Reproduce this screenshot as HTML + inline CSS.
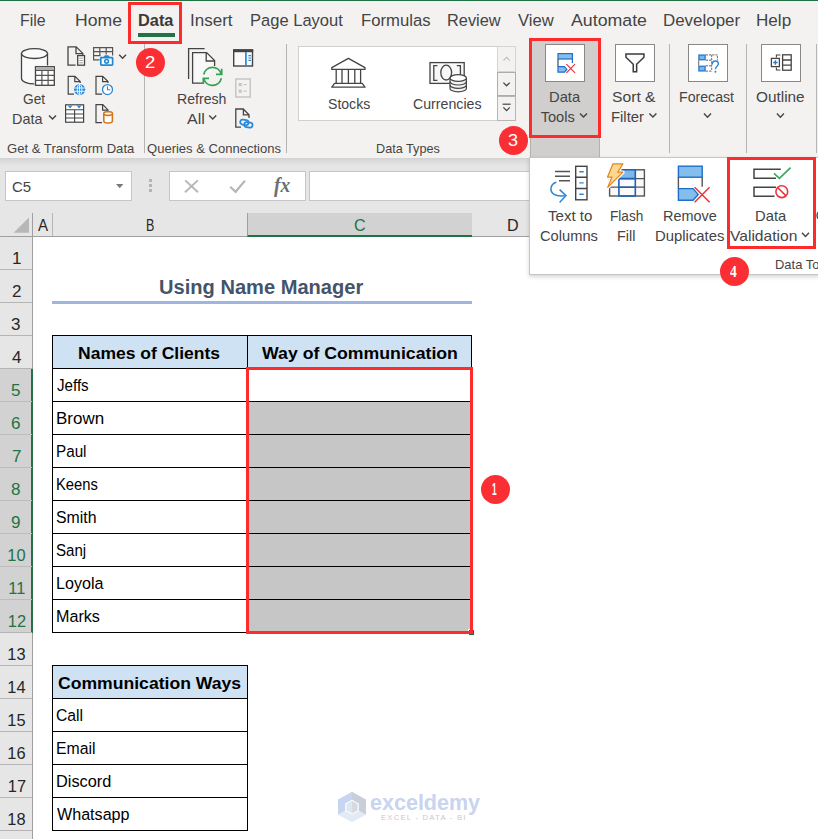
<!DOCTYPE html>
<html lang="en">
<head>
<meta charset="utf-8">
<title>Using Name Manager - Excel</title>
<style>
html,body{margin:0;padding:0;background:#fff;}
body{width:818px;height:839px;overflow:hidden;position:relative;font-family:"Liberation Sans",sans-serif;}
#app{position:absolute;left:0;top:0;width:818px;height:839px;overflow:hidden;background:#fff;}
.abs,.t,svg.i{position:absolute;}
.t{white-space:pre;line-height:1;transform-origin:0 0;}
svg.i{overflow:visible;}
.tabs{left:0;top:0;width:818px;height:40px;background:#f3f2f1;}
.topline{left:0;top:0;width:818px;height:1px;background:#217346;}
.ribbon{left:0;top:38px;width:818px;height:120px;background:#f3f2f1;}
.sep{width:1px;background:#b6b4b2;top:44px;height:109px;}
.shadow{left:0;top:158px;width:818px;height:8px;background:linear-gradient(#d2d2d2,#dcdcdc 40%,#e6e6e6);}
.fbar{left:0;top:158px;width:818px;height:55px;background:#e6e6e6;}
.box{background:#fff;border:1px solid #c6c6c6;box-sizing:border-box;}
.colhdr{left:0;top:212px;width:818px;height:25px;background:#e6e6e6;border-bottom:1px solid #9f9f9f;box-sizing:border-box;}
.rowhdr{left:0;top:237px;width:33px;height:602px;background:#e6e6e6;border-right:1px solid #9f9f9f;box-sizing:border-box;}
.rline{left:0;width:32px;height:1px;background:#b5b5b5;}
.cell{box-sizing:border-box;}
.redbox{border:3px solid #fd2b2b;box-sizing:border-box;}
.badge{width:29.2px;height:29.2px;border-radius:50%;background:#fb2f33;}
.hl{height:1px;background:#000;}
.vl{width:1px;background:#000;}
.iconbox{background:#fff;border:1px solid #8a8886;box-sizing:border-box;width:40px;height:38px;top:44px;}
</style>
</head>
<body>
<div id="app">
<!-- ===== Tab strip ===== -->
<div class="abs tabs"></div>
<div class="abs ribbon"></div>
<div class="abs topline"></div>
<div class="abs" style="left:138px;top:33px;width:37px;height:4px;background:#217346"></div>

<!-- ===== Ribbon separators ===== -->
<div class="abs sep" style="left:144px"></div>
<div class="abs sep" style="left:286px"></div>
<div class="abs sep" style="left:669px"></div>
<div class="abs sep" style="left:746px"></div>
<div class="abs sep" style="left:816px"></div>

<!-- Data types gallery -->
<div class="abs box" style="left:298px;top:46px;width:218px;height:75px;border-color:#d2d0ce"></div>
<div class="abs" style="left:497px;top:46px;width:19px;height:26px;background:#f3f2f1;border:1px solid #d6d4d2;box-sizing:border-box"></div>
<div class="abs" style="left:497px;top:72px;width:19px;height:24px;background:#f3f2f1;border:1px solid #aeacaa;box-sizing:border-box"></div>
<div class="abs" style="left:497px;top:96px;width:19px;height:25px;background:#f3f2f1;border:1px solid #b8b6b4;box-sizing:border-box"></div>

<!-- Data Tools pressed button -->
<div class="abs" style="left:530px;top:38px;width:70px;height:120px;background:#d0cfce;border-left:1px solid #b3b1af;border-right:1px solid #b3b1af;box-sizing:border-box"></div>
<div class="abs iconbox" style="left:545px;border-color:#8a8886"></div>
<div class="abs iconbox" style="left:615px"></div>
<div class="abs iconbox" style="left:688px"></div>
<div class="abs iconbox" style="left:761px"></div>

<!-- ===== Formula bar ===== -->
<div class="abs fbar"></div>
<div class="abs shadow"></div>
<div class="abs box" style="left:5px;top:171px;width:127px;height:30px"></div>
<div class="abs box" style="left:169px;top:171px;width:137px;height:30px"></div>
<div class="abs box" style="left:309px;top:171px;width:520px;height:30px"></div>
<div class="abs" style="left:149px;top:179px;width:3px;height:3px;background:#b4b4b4;box-shadow:0 5px 0 #b4b4b4,0 10px 0 #b4b4b4"></div>

<!-- ===== Grid ===== -->
<div class="abs colhdr"></div>
<div class="abs" style="left:247px;top:213px;width:225px;height:24px;background:#d2d2d2;border-bottom:2px solid #217346;border-left:1px solid #9f9f9f;box-sizing:border-box"></div>
<div class="abs" style="left:32px;top:213px;width:1px;height:24px;background:#9f9f9f"></div>
<div class="abs" style="left:52px;top:213px;width:1px;height:23px;background:#b5b5b5"></div>
<div class="abs rowhdr"></div>
<div class="abs" style="left:0;top:369px;width:33px;height:264px;background:#d2d2d2;border-right:2px solid #217346;box-sizing:border-box"></div>
<div class="abs rline" style="top:269px;background:#b5b5b5"></div>
<div class="abs rline" style="top:302px;background:#b5b5b5"></div>
<div class="abs rline" style="top:335px;background:#b5b5b5"></div>
<div class="abs rline" style="top:368px;background:#b5b5b5"></div>
<div class="abs rline" style="top:401px;background:#bcbcbc"></div>
<div class="abs rline" style="top:434px;background:#bcbcbc"></div>
<div class="abs rline" style="top:467px;background:#bcbcbc"></div>
<div class="abs rline" style="top:500px;background:#bcbcbc"></div>
<div class="abs rline" style="top:533px;background:#bcbcbc"></div>
<div class="abs rline" style="top:566px;background:#bcbcbc"></div>
<div class="abs rline" style="top:599px;background:#bcbcbc"></div>
<div class="abs rline" style="top:632px;background:#b5b5b5"></div>
<div class="abs rline" style="top:665px;background:#b5b5b5"></div>
<div class="abs rline" style="top:698px;background:#b5b5b5"></div>
<div class="abs rline" style="top:731px;background:#b5b5b5"></div>
<div class="abs rline" style="top:764px;background:#b5b5b5"></div>
<div class="abs rline" style="top:797px;background:#b5b5b5"></div>
<div class="abs rline" style="top:830px;background:#b5b5b5"></div>

<!-- title underline -->
<div class="abs" style="left:52px;top:301px;width:420px;height:3px;background:#9fb4df"></div>

<!-- table 1 -->
<div class="abs" style="left:53px;top:336px;width:418px;height:32px;background:#cfe2f3"></div>
<div class="abs" style="left:248px;top:402px;width:223px;height:230px;background:#c6c6c6"></div>
<div class="abs hl" style="left:52px;top:335px;width:420px"></div>
<div class="abs hl" style="left:52px;top:368px;width:420px"></div>
<div class="abs hl" style="left:52px;top:401px;width:420px"></div>
<div class="abs hl" style="left:52px;top:434px;width:420px"></div>
<div class="abs hl" style="left:52px;top:467px;width:420px"></div>
<div class="abs hl" style="left:52px;top:500px;width:420px"></div>
<div class="abs hl" style="left:52px;top:533px;width:420px"></div>
<div class="abs hl" style="left:52px;top:566px;width:420px"></div>
<div class="abs hl" style="left:52px;top:599px;width:420px"></div>
<div class="abs hl" style="left:52px;top:632px;width:420px"></div>
<div class="abs vl" style="left:52px;top:335px;height:298px"></div>
<div class="abs vl" style="left:247px;top:335px;height:298px"></div>
<div class="abs vl" style="left:471px;top:335px;height:298px"></div>
<!-- table 2 -->
<div class="abs" style="left:53px;top:666px;width:194px;height:32px;background:#cfe2f3"></div>
<div class="abs hl" style="left:52px;top:665px;width:196px"></div>
<div class="abs hl" style="left:52px;top:698px;width:196px"></div>
<div class="abs hl" style="left:52px;top:731px;width:196px"></div>
<div class="abs hl" style="left:52px;top:764px;width:196px"></div>
<div class="abs hl" style="left:52px;top:797px;width:196px"></div>
<div class="abs hl" style="left:52px;top:830px;width:196px"></div>
<div class="abs vl" style="left:52px;top:665px;height:166px"></div>
<div class="abs vl" style="left:247px;top:665px;height:166px"></div>

<!-- red selection -->
<div class="abs" style="left:468px;top:629px;width:5px;height:5px;background:#1e6b41;border-left:1px solid #fff;border-top:1px solid #fff"></div>
<div class="abs redbox" style="left:246px;top:367px;width:227px;height:267px"></div>

<!-- ===== Dropdown panel ===== -->
<div class="abs" style="left:529px;top:157px;width:300px;height:118px;background:#fff;border:1px solid #c6c6c6;box-sizing:border-box;box-shadow:0 2px 4px rgba(0,0,0,.17)"></div>

<!-- red boxes -->
<div class="abs redbox" style="left:128px;top:2px;width:54px;height:42px"></div>
<div class="abs redbox" style="left:529px;top:38px;width:72px;height:100px"></div>
<div class="abs redbox" style="left:727px;top:157px;width:89px;height:92px"></div>

<!-- badges -->
<div class="abs badge" style="left:135.9px;top:47.7px"></div>
<div class="abs badge" style="left:498.9px;top:125.7px"></div>
<div class="abs badge" style="left:719.9px;top:256.9px"></div>
<div class="abs badge" style="left:481px;top:474.8px"></div>

<svg class="i" style="left:0;top:0" width="818" height="839" viewBox="0 0 818 839" fill="none" stroke-linecap="butt" stroke-linejoin="miter">
<!-- ===== Get Data (cylinder + table) ===== -->
<path d="M21.500 53.600V78.500c0 3 5.800 5.400 13 5.400s13-2.400 13-5.400V53.600z" fill="#fafafa" stroke="#444" stroke-width="1.300"/>
<ellipse cx="34.500" cy="53.600" rx="13" ry="4.900" fill="#fafafa" stroke="#444" stroke-width="1.300"/>
<rect x="34.300" y="65.500" width="21.200" height="21" fill="#f3f2f1"/>
<rect x="35.500" y="66.700" width="18.800" height="18.600" fill="#fff" stroke="#444" stroke-width="1.300"/>
<rect x="36.100" y="67.300" width="17.600" height="3" fill="#b0b0b0"/>
<path d="M35.500 70.500h18.800M35.500 75.300h18.800M35.500 80.300h18.800M41.900 70.500v14.800M48.100 70.500v14.800" stroke="#555" stroke-width="1.200"/>

<!-- small icons column 1 -->
<!-- From Text/CSV -->
<g stroke="#444" stroke-width="1.300">
<path d="M75.600 65.200H68V46.800h8.200l6.600 6.600V55M76 46.800v6.800h6.800"/>
<rect x="77.700" y="55.600" width="6.800" height="9.600" fill="#fff"/>
</g>
<path d="M79.200 58.200h3.800M79.200 60.500h3.800M79.200 62.800h3.800" stroke="#8a8a8a" stroke-width="0.800"/>
<!-- From Picture -->
<g stroke="#555" stroke-width="1.200">
<path d="M99.600 59.800H93.600V47.600H112.600V55.400M93.600 51.600h19M93.600 55.600h7M99.800 47.600v8.600M106.200 47.600v7"/>
</g>
<rect x="100.800" y="57.600" width="11.800" height="7.600" rx="0.600" fill="#fff" stroke="#1e8ad6" stroke-width="1.700"/>
<path d="M103.800 57.400l1-1.700h3.600l1 1.700z" fill="#1e8ad6" stroke="#1e8ad6" stroke-width="0.800"/>
<circle cx="106.600" cy="61.300" r="1.900" stroke="#1e8ad6" stroke-width="1.500" fill="#fff"/>
<path d="M119.200 54.800l3.400 3.500 3.400-3.500" stroke="#444" stroke-width="1.400"/>
<!-- From Web -->
<g stroke="#444" stroke-width="1.2">
<path d="M74 94.2H68.2V76.3h6.8l5.2 5.2V83M74.8 76.3v5.4h5.4"/>
</g>
<circle cx="79.6" cy="89.6" r="5.6" fill="#2b88d8"/>
<g stroke="#fff" stroke-width="0.9"><ellipse cx="79.6" cy="89.6" rx="2.3" ry="5"/><path d="M74.3 88h10.6M74.3 91.3h10.6M79.6 84.4v10.4"/></g>
<!-- Recent sources -->
<g stroke="#444" stroke-width="1.2">
<path d="M102 94.2H96V76.3h6.8l5.2 5.2V83M102.6 76.3v5.4h5.4"/>
</g>
<circle cx="107.5" cy="89.6" r="5" fill="#fff" stroke="#2b88d8" stroke-width="1.3"/>
<path d="M107.5 86.3v3.5h2.8" stroke="#2b88d8" stroke-width="1.1"/>
<!-- From table/range -->
<rect x="65.6" y="104.8" width="18" height="17.4" fill="#fff" stroke="#444" stroke-width="1.2"/>
<path d="M65.6 109.8h18M65.6 114h18M65.6 118h18M74.6 109.8v12.4" stroke="#444" stroke-width="1.1"/>
<path d="M67.6 105.6h5l-2.5 2.8zM76.6 105.6h5l-2.5 2.8z" fill="#2b88d8"/>
<!-- Existing connections -->
<g stroke="#444" stroke-width="1.2">
<path d="M102 122.6H96V104.7h6.8l5.2 5.2V112M102.6 104.7v5.4h5.4"/>
</g>
<g stroke="#d4771a" stroke-width="1.600" fill="#fff">
<path d="M103.8 113.5v7.5c0 1.1 1.9 2 4.3 2s4.3-.9 4.3-2v-7.5"/>
<ellipse cx="108.1" cy="113.5" rx="4.3" ry="1.9"/>
</g>

<!-- ===== Refresh All ===== -->
<g stroke="#444" stroke-width="1.3">
<path d="M188.6 79V48.6h16"/>
<path d="M204 83.200H192.600V52.600h14l8 8V66" fill="#f8f8f8"/><path d="M206.200 52.600v8.400h8.400"/>
</g>
<g stroke="#33a152" stroke-width="1.700">
<path d="M203.700 74.500A9 9 0 0 1 221.200 74.100"/>
<path d="M221.300 78.300A9 9 0 0 1 203.800 78.700"/>
<path d="M216 74.400H221.700V68.700M209 78.400H203.300V84.100"/>
</g>
<!-- Queries & Connections pane -->
<rect x="233.700" y="50" width="18.800" height="16" fill="#fafafa" stroke="#444" stroke-width="1.400"/>
<rect x="233" y="49.300" width="20.200" height="2.900" fill="#444"/>
<path d="M245.900 52v14" stroke="#2b88d8" stroke-width="1.700"/>
<path d="M248.400 55.600h2.600M248.400 58h2.600M248.400 60.400h2.600" stroke="#2b88d8" stroke-width="1.200"/>
<!-- Properties (disabled) -->
<rect x="235.8" y="79" width="14.4" height="18" fill="#f3f2f1" stroke="#c0bebc" stroke-width="1.3"/>
<rect x="238.6" y="83" width="3.2" height="3.2" fill="#c8c6c4"/><rect x="238.6" y="89.6" width="3.2" height="3.2" fill="#c8c6c4"/>
<path d="M243.6 84.6h3M243.6 91.2h3" stroke="#c8c6c4" stroke-width="1.2"/>
<!-- Edit links -->
<g stroke="#444" stroke-width="1.3">
<path d="M241 127.2H235.8V109h7.4l5.8 5.8V118M243.4 109v5.8h5.6"/>
</g>
<g stroke="#2b88d8" stroke-width="1.700">
<rect x="240.200" y="119.800" width="8.400" height="5" rx="2.500" transform="rotate(8 244.400 122.300)"/>
<rect x="244.200" y="122.400" width="8.400" height="5" rx="2.500" transform="rotate(8 248.400 124.900)"/>
</g>

<!-- ===== Stocks ===== -->
<g stroke="#444" stroke-width="1.3">
<path d="M331.800 67.600L348.400 58.400L365 67.600V69.400H331.800Z" stroke-linejoin="round"/>
<path d="M336.200 69.600v13.800M342 69.600v13.800M348.400 69.600v13.800M354.800 69.600v13.800M360.600 69.600v13.800"/>
<path d="M334.600 83.400h27.600l2.800 3.800h-33.200z" stroke-linejoin="round"/>
</g>
<!-- ===== Currencies ===== -->
<rect x="430" y="62.600" width="34.200" height="20.800" fill="#f8f8f8" stroke="#444" stroke-width="1.3"/>
<g stroke="#444" stroke-width="1.3">
<path d="M437.400 65.600h-3.600v14.800h3.600M456.800 65.600h3.600v9"/>
<ellipse cx="446.200" cy="72.600" rx="5.400" ry="7.400"/>
</g>
<g stroke="#444" stroke-width="1.200" fill="#f3f2f1">
<path d="M450 78v10.400c0 1.900 3.700 3.400 8.200 3.400s8.200-1.500 8.200-3.400V78"/>
<ellipse cx="458.200" cy="78" rx="8.200" ry="3.400" fill="#fff"/>
<path d="M450 81.600c0 1.900 3.700 3.400 8.200 3.400s8.200-1.500 8.200-3.400M450 85c0 1.900 3.700 3.400 8.200 3.400s8.200-1.500 8.200-3.400" fill="none"/>
</g>
<!-- gallery arrows -->
<path d="M503.4 60.6l3.2-3.2 3.2 3.2" stroke="#c0bebc" stroke-width="1.2"/>
<path d="M503.4 82.6l3.2 3.2 3.2-3.2" stroke="#444" stroke-width="1.3"/>
<path d="M502.6 104.2h8" stroke="#444" stroke-width="1.2"/>
<path d="M503.4 107.4l3.2 3.2 3.2-3.2" stroke="#444" stroke-width="1.3"/>

<!-- ===== Data Tools button icon ===== -->
<rect x="558" y="53.6" width="14.4" height="5.4" fill="#83beec" stroke="#1e6fc8" stroke-width="1.2"/>
<path d="M558 59v7.4" stroke="#555" stroke-width="1.3"/>
<path d="M572.4 59v4" stroke="#1e6fc8" stroke-width="1.2"/>
<path d="M558 66.6h6.4l2.4 2.8-2.4 2.8H558z" fill="#83beec" stroke="#1e6fc8" stroke-width="1.2"/>
<path d="M566.4 64.2l8.6 8.6M575 64.2l-8.6 8.6" stroke="#e8363c" stroke-width="1.2"/>
<!-- Sort & Filter funnel -->
<path d="M625.950 54.050H643.950V57.300L636.650 64.200V71.750H633.250V64.200L625.950 57.300Z" stroke="#3b3b3b" stroke-width="1.500" fill="#fafafa"/>
<!-- Forecast icon -->
<rect x="698.200" y="54.400" width="7.600" height="6" fill="#2b7fd0"/><rect x="698.200" y="65.600" width="7.600" height="6" fill="#2b7fd0"/><path d="M698.700 60.400v5.200" stroke="#666" stroke-width="1"/>
<rect x="699.600" y="55.800" width="4.800" height="3.200" fill="#7ab8ea"/><rect x="699.600" y="67" width="4.800" height="3.200" fill="#7ab8ea"/>

<g stroke="#666" stroke-width="1" stroke-dasharray="2.200 1">
<path d="M705.800 54.900h11.600v5.600M705.800 60.200h6M705.800 65.800h6M711.700 54.900v16.400M705.800 71.100h5.600"/>
</g>
<path d="M712.200 64.600c0-2.600 1.600-3.600 3.200-3.600s3 1.100 3 2.800c0 2.400-3 2.600-3 5.400" stroke="#2b88d8" stroke-width="1.400"/>
<circle cx="715.400" cy="71.800" r="1" fill="#2b88d8"/>
<!-- Outline icon -->
<g stroke="#444" stroke-width="1.300">
<rect x="782.600" y="54.800" width="8.600" height="15.400" fill="#fff"/>
<path d="M782.600 60h8.600M782.600 65.200h8.600"/>
<path d="M780.400 55h-4v2.400M780.400 70h-4v-2.400" stroke-width="1.100"/>
</g>
<rect x="771.400" y="58.400" width="8" height="8.200" fill="#fff" stroke="#444" stroke-width="1.300"/>
<path d="M773.200 62.500h4.400M775.400 60.300v4.400" stroke="#2b78c8" stroke-width="1.400"/>

<!-- ===== label chevrons ===== -->
<g stroke="#444" stroke-width="1.400">
<path d="M49.0 115.4l3.5 3.600l3.5-3.600"/>
<path d="M209.2 115.4l3.5 3.600l3.5-3.600"/>
<path d="M580.0 113.4l3.5 3.600l3.5-3.600"/>
<path d="M649.4 113.4l3.5 3.600l3.5-3.600"/>
<path d="M704.0 113.6l3.5 3.600l3.5-3.600"/>
<path d="M776.9 113.6l3.5 3.600l3.5-3.600"/>
<path d="M802.0 232.8l3.5 3.600l3.5-3.600"/>
</g>

<!-- ===== Formula bar glyphs ===== -->
<path d="M116 184h7.400l-3.700 4.200z" fill="#7a7a7a"/>
<path d="M185.200 180.400l12.800 11.800M197.800 180.400l-12.800 11.800" stroke="#b6b6b6" stroke-width="1.900"/>
<path d="M230.200 186.800l5.400 5l9.400-11.200" stroke="#b6b6b6" stroke-width="2.200"/>

<!-- select all triangle -->
<path d="M29 217.6V232.8H13.6z" fill="#b7b7b7"/>

<!-- ===== Panel icons ===== -->
<!-- Text to Columns -->
<path d="M555 171.600h15M555 176.200h15M559 180.800h11" stroke="#555" stroke-width="1.500"/>
<g stroke="#444" stroke-width="1.400" fill="#fff">
<rect x="575.700" y="166.300" width="11.300" height="33.500"/>
<path d="M575.700 177.300h11.300M575.700 188.500h11.300"/>
</g>
<path d="M579.300 171.800h4.400M579.300 182.900h4.400M579.300 194.200h4.400" stroke="#2b88d8" stroke-width="1.400"/>
<path d="M556.400 182.200c-6 1.600-7.400 8.800-2.400 12.200c3 2 6.600 1.700 10.600 1.400" stroke="#2b88d8" stroke-width="1.500"/>
<path d="M559.600 189.600l6.400 6l-6.400 6.800" stroke="#2b88d8" stroke-width="1.500"/>
<!-- Flash Fill -->
<rect x="609.600" y="169.800" width="34.800" height="26.200" fill="#fafafa" stroke="#555" stroke-width="1.400"/>
<path d="M609.600 178.600h34.800M609.600 187.200h34.800" stroke="#555" stroke-width="1.300"/>
<path d="M619 169.800h16.200v8.800h-16.200z" fill="#7db8ea"/>
<path d="M618.900 169.800h16.400v26.200h-16.400zM618.900 178.600h16.400M618.900 187.200h16.400" stroke="#1e62b4" stroke-width="1.600"/>
<path d="M612.900 163.900h10l-5.200 8.300h5.200l-15.100 15.100l4.100-10.200h-4.400z" fill="#fff" stroke="#fff" stroke-width="3.600" stroke-linejoin="round"/>
<path d="M612.900 163.900h10l-5.200 8.300h5.200l-15.100 15.100l4.100-10.200h-4.400z" fill="#fbd791" stroke="#e0861f" stroke-width="1.200" stroke-linejoin="round"/>
<!-- Remove Duplicates -->
<rect x="678.400" y="166.200" width="23.800" height="11" fill="#83beec" stroke="#1e6fc8" stroke-width="1.400"/>
<path d="M678.400 177.200v11.400M702.200 177.200v9.600" stroke="#555" stroke-width="1.400"/>
<path d="M678.400 188.600h14.600l5.200 5.800-5.200 5.800h-14.600z" fill="#83beec" stroke="#1e6fc8" stroke-width="1.400"/>
<path d="M694.600 187.200l15 15M709.600 187.200l-15 15" stroke="#e8363c" stroke-width="1.500"/>
<!-- Data Validation -->
<path d="M780.800 169.200h-26.800v9h22" stroke="#444" stroke-width="1.500"/>
<path d="M776 187.200h-22v9h20.500" stroke="#444" stroke-width="1.500"/>
<path d="M774 173.400l5.400 5l11.200-10.800" stroke="#3fa55a" stroke-width="1.700"/>
<circle cx="781.800" cy="191.700" r="5.900" fill="#fff" stroke="#e8363c" stroke-width="1.600"/>
<path d="M777.600 187.500l8.400 8.400" stroke="#e8363c" stroke-width="1.600"/>
<path d="M819.400 211.400c-1.800 1-2.400 2.400-2.400 4s0.600 3 2.400 4" stroke="#444" stroke-width="1.400"/>
<!-- exceldemy watermark logo -->
<g stroke="none">
<path d="M352 791.700L338 799.500V814.800L345.200 811V803.600L352 799.800Z" fill="#c7d5f1"/>
<path d="M352 791.700L366 799.500V814.800L358.800 811V803.600L352 799.800Z" fill="#c9cfd8"/>
<path d="M338 814.800L352 822.200L366 814.800L358.800 811L352 814.600L345.200 811Z" fill="#e3eaf6"/>
<path d="M352 800.800L346.400 804V810.400L352 813.400Z" fill="#dfe6f3"/>
<path d="M352 800.800L357.600 804V810.400L352 813.400Z" fill="#d5dae2"/>
</g>
</svg>


<span class="t" style="left:20.01px;top:13px;font-size:16.8px;color:#444;transform:scaleX(0.9440);">File</span>
<span class="t" style="left:75.40px;top:13px;font-size:16.8px;color:#444;transform:scaleX(1.0488);">Home</span>
<span class="t" style="left:138.47px;top:13px;font-size:16.8px;color:#3b3a39;transform:scaleX(0.9750);font-weight:700;">Data</span>
<span class="t" style="left:190.44px;top:13px;font-size:16.8px;color:#444;transform:scaleX(1.0146);">Insert</span>
<span class="t" style="left:250.47px;top:13px;font-size:16.8px;color:#444;transform:scaleX(0.9849);">Page Layout</span>
<span class="t" style="left:360.96px;top:13px;font-size:16.8px;color:#444;transform:scaleX(0.9941);">Formulas</span>
<span class="t" style="left:447.48px;top:13px;font-size:16.8px;color:#444;transform:scaleX(0.9741);">Review</span>
<span class="t" style="left:518.45px;top:13px;font-size:16.8px;color:#444;transform:scaleX(0.9889);">View</span>
<span class="t" style="left:571.45px;top:13px;font-size:16.8px;color:#444;transform:scaleX(1.0577);">Automate</span>
<span class="t" style="left:662.94px;top:13px;font-size:16.8px;color:#444;transform:scaleX(1.0080);">Developer</span>
<span class="t" style="left:755.93px;top:13px;font-size:16.8px;color:#444;transform:scaleX(1.0182);">Help</span>
<span class="t" style="left:22.81px;top:92px;font-size:14.6px;color:#444;transform:scaleX(0.9391);">Get</span>
<span class="t" style="left:12.36px;top:112px;font-size:14.6px;color:#444;transform:scaleX(0.9867);">Data</span>
<span class="t" style="left:176.98px;top:92px;font-size:14.6px;color:#444;transform:scaleX(0.9673);">Refresh</span>
<span class="t" style="left:186.75px;top:112px;font-size:14.6px;color:#444;transform:scaleX(1.1000);">All</span>
<span class="t" style="left:328.09px;top:97px;font-size:14.6px;color:#444;transform:scaleX(0.9643);">Stocks</span>
<span class="t" style="left:412.58px;top:97px;font-size:14.6px;color:#444;transform:scaleX(0.9710);">Currencies</span>
<span class="t" style="left:548.94px;top:90px;font-size:14.6px;color:#444;transform:scaleX(1.0100);">Data</span>
<span class="t" style="left:540.65px;top:110px;font-size:14.6px;color:#444;transform:scaleX(1.0000);">Tools</span>
<span class="t" style="left:612.38px;top:90px;font-size:14.6px;color:#444;transform:scaleX(1.0744);">Sort &amp;</span>
<span class="t" style="left:610.83px;top:110px;font-size:14.6px;color:#444;transform:scaleX(1.0161);">Filter</span>
<span class="t" style="left:679.48px;top:90px;font-size:14.6px;color:#444;transform:scaleX(0.9696);">Forecast</span>
<span class="t" style="left:756.40px;top:90px;font-size:14.6px;color:#444;transform:scaleX(1.0511);">Outline</span>
<span class="t" style="left:6.85px;top:144px;font-size:11.9px;color:#444;transform:scaleX(1.1009);">Get &amp; Transform Data</span>
<span class="t" style="left:147.35px;top:144px;font-size:11.9px;color:#444;transform:scaleX(1.0959);">Queries &amp; Connections</span>
<span class="t" style="left:375.69px;top:144px;font-size:11.9px;color:#444;transform:scaleX(1.0644);">Data Types</span>
<span class="t" style="left:548.05px;top:209px;font-size:14.6px;color:#444;transform:scaleX(1.0310);">Text to</span>
<span class="t" style="left:540.44px;top:229px;font-size:14.6px;color:#444;transform:scaleX(1.0054);">Columns</span>
<span class="t" style="left:609.72px;top:209px;font-size:14.6px;color:#444;transform:scaleX(0.9324);">Flash</span>
<span class="t" style="left:617.07px;top:229px;font-size:14.6px;color:#444;transform:scaleX(0.9824);">Fill</span>
<span class="t" style="left:663.06px;top:209px;font-size:14.6px;color:#444;transform:scaleX(0.9906);">Remove</span>
<span class="t" style="left:654.83px;top:229px;font-size:14.6px;color:#444;transform:scaleX(1.0194);">Duplicates</span>
<span class="t" style="left:755.14px;top:209px;font-size:14.6px;color:#444;transform:scaleX(1.0133);">Data</span>
<span class="t" style="left:730.25px;top:229px;font-size:14.6px;color:#444;transform:scaleX(1.0694);">Validation</span>
<span class="t" style="left:774.96px;top:260px;font-size:11.9px;color:#444;transform:scaleX(1.0891);">Data Tools</span>
<span class="t" style="left:12.08px;top:180px;font-size:14px;color:#444;transform:scaleX(1.0688);">C5</span>
<span class="t" style="left:37.55px;top:218px;font-size:16.6px;color:#262626;transform:scaleX(0.9091);">A</span>
<span class="t" style="left:145.89px;top:218px;font-size:16.6px;color:#262626;transform:scaleX(0.7556);">B</span>
<span class="t" style="left:354.08px;top:218px;font-size:16.6px;color:#217346;transform:scaleX(0.9700);">C</span>
<span class="t" style="left:506.68px;top:218px;font-size:16.6px;color:#262626;transform:scaleX(0.9700);">D</span>
<span class="t" style="left:273.85px;top:175px;font-size:20px;color:#6e6e6e;transform:scaleX(0.9688);font-weight:700;font-style:italic;font-family:&quot;Liberation Serif&quot;, serif;">fx</span>
<span class="t" style="left:11.52px;top:250px;font-size:16.4px;color:#262626;transform:scaleX(1.0400);">1</span>
<span class="t" style="left:11.52px;top:283px;font-size:16.4px;color:#262626;transform:scaleX(1.0400);">2</span>
<span class="t" style="left:11.00px;top:316px;font-size:16.4px;color:#262626;transform:scaleX(1.0400);">3</span>
<span class="t" style="left:11.52px;top:349px;font-size:16.4px;color:#262626;transform:scaleX(1.0400);">4</span>
<span class="t" style="left:11.00px;top:382px;font-size:16.4px;color:#217346;transform:scaleX(1.0400);">5</span>
<span class="t" style="left:11.00px;top:415px;font-size:16.4px;color:#217346;transform:scaleX(1.0400);">6</span>
<span class="t" style="left:11.52px;top:448px;font-size:16.4px;color:#217346;transform:scaleX(1.0400);">7</span>
<span class="t" style="left:11.00px;top:481px;font-size:16.4px;color:#217346;transform:scaleX(1.0400);">8</span>
<span class="t" style="left:11.00px;top:514px;font-size:16.4px;color:#217346;transform:scaleX(1.0400);">9</span>
<span class="t" style="left:7.30px;top:547px;font-size:16.4px;color:#217346;transform:scaleX(1.0000);">10</span>
<span class="t" style="left:8.30px;top:580px;font-size:16.4px;color:#217346;transform:scaleX(1.0000);">11</span>
<span class="t" style="left:7.80px;top:613px;font-size:16.4px;color:#217346;transform:scaleX(1.0000);">12</span>
<span class="t" style="left:7.30px;top:646px;font-size:16.4px;color:#262626;transform:scaleX(1.0000);">13</span>
<span class="t" style="left:7.30px;top:679px;font-size:16.4px;color:#262626;transform:scaleX(1.0000);">14</span>
<span class="t" style="left:7.30px;top:712px;font-size:16.4px;color:#262626;transform:scaleX(1.0000);">15</span>
<span class="t" style="left:7.30px;top:745px;font-size:16.4px;color:#262626;transform:scaleX(1.0000);">16</span>
<span class="t" style="left:7.80px;top:778px;font-size:16.4px;color:#262626;transform:scaleX(1.0000);">17</span>
<span class="t" style="left:7.30px;top:811px;font-size:16.4px;color:#262626;transform:scaleX(1.0000);">18</span>
<span class="t" style="left:158.72px;top:278px;font-size:19.6px;color:#44546a;transform:scaleX(1.0253);font-weight:700;">Using Name Manager</span>
<span class="t" style="left:78.40px;top:346px;font-size:16.6px;color:#000;transform:scaleX(1.0549);font-weight:700;">Names of Clients</span>
<span class="t" style="left:262.05px;top:346px;font-size:16.6px;color:#000;transform:scaleX(1.0661);font-weight:700;">Way of Communication</span>
<span class="t" style="left:57.25px;top:377px;font-size:16.3px;color:#000;transform:scaleX(0.9294);">Jeffs</span>
<span class="t" style="left:56.21px;top:410px;font-size:16.3px;color:#000;transform:scaleX(1.0432);">Brown</span>
<span class="t" style="left:56.31px;top:443px;font-size:16.3px;color:#000;transform:scaleX(0.9355);">Paul</span>
<span class="t" style="left:56.34px;top:476px;font-size:16.3px;color:#000;transform:scaleX(0.9067);">Keens</span>
<span class="t" style="left:56.28px;top:509px;font-size:16.3px;color:#000;transform:scaleX(0.9725);">Smith</span>
<span class="t" style="left:56.32px;top:542px;font-size:16.3px;color:#000;transform:scaleX(0.9258);">Sanj</span>
<span class="t" style="left:56.26px;top:575px;font-size:16.3px;color:#000;transform:scaleX(0.9915);">Loyola</span>
<span class="t" style="left:56.26px;top:608px;font-size:16.3px;color:#000;transform:scaleX(0.9907);">Marks</span>
<span class="t" style="left:58.19px;top:676px;font-size:16.6px;color:#000;transform:scaleX(1.0602);font-weight:700;">Communication Ways</span>
<span class="t" style="left:56.28px;top:707px;font-size:16.3px;color:#000;transform:scaleX(0.9654);">Call</span>
<span class="t" style="left:56.28px;top:740px;font-size:16.3px;color:#000;transform:scaleX(0.9718);">Email</span>
<span class="t" style="left:56.25px;top:773px;font-size:16.3px;color:#000;transform:scaleX(1.0019);">Discord</span>
<span class="t" style="left:57.25px;top:806px;font-size:16.3px;color:#000;transform:scaleX(0.9890);">Whatsapp</span>
<span class="t" style="left:144.99px;top:55px;font-size:16px;color:#fff;transform:scaleX(1.1571);">2</span>
<span class="t" style="left:507.92px;top:133px;font-size:16px;color:#fff;transform:scaleX(1.1286);">3</span>
<span class="t" style="left:730.45px;top:263px;font-size:17.7px;color:#fff;transform:scaleX(0.7667);font-weight:700;font-family:&quot;Liberation Serif&quot;, serif;">4</span>
<span class="t" style="left:491.75px;top:482px;font-size:16.7px;color:#fff;transform:scaleX(0.5000);font-weight:700;">1</span>
<span class="t" style="left:369.77px;top:792px;font-size:22px;color:#c8d4f0;transform:scaleX(0.9784);font-weight:700;">exceldemy</span>
<span class="t" style="left:381.14px;top:815px;font-size:6.9px;color:#c6cad1;transform:scaleX(1.1149);letter-spacing:1.1px;">EXCEL - DATA - BI</span>
</div>
</body>
</html>
